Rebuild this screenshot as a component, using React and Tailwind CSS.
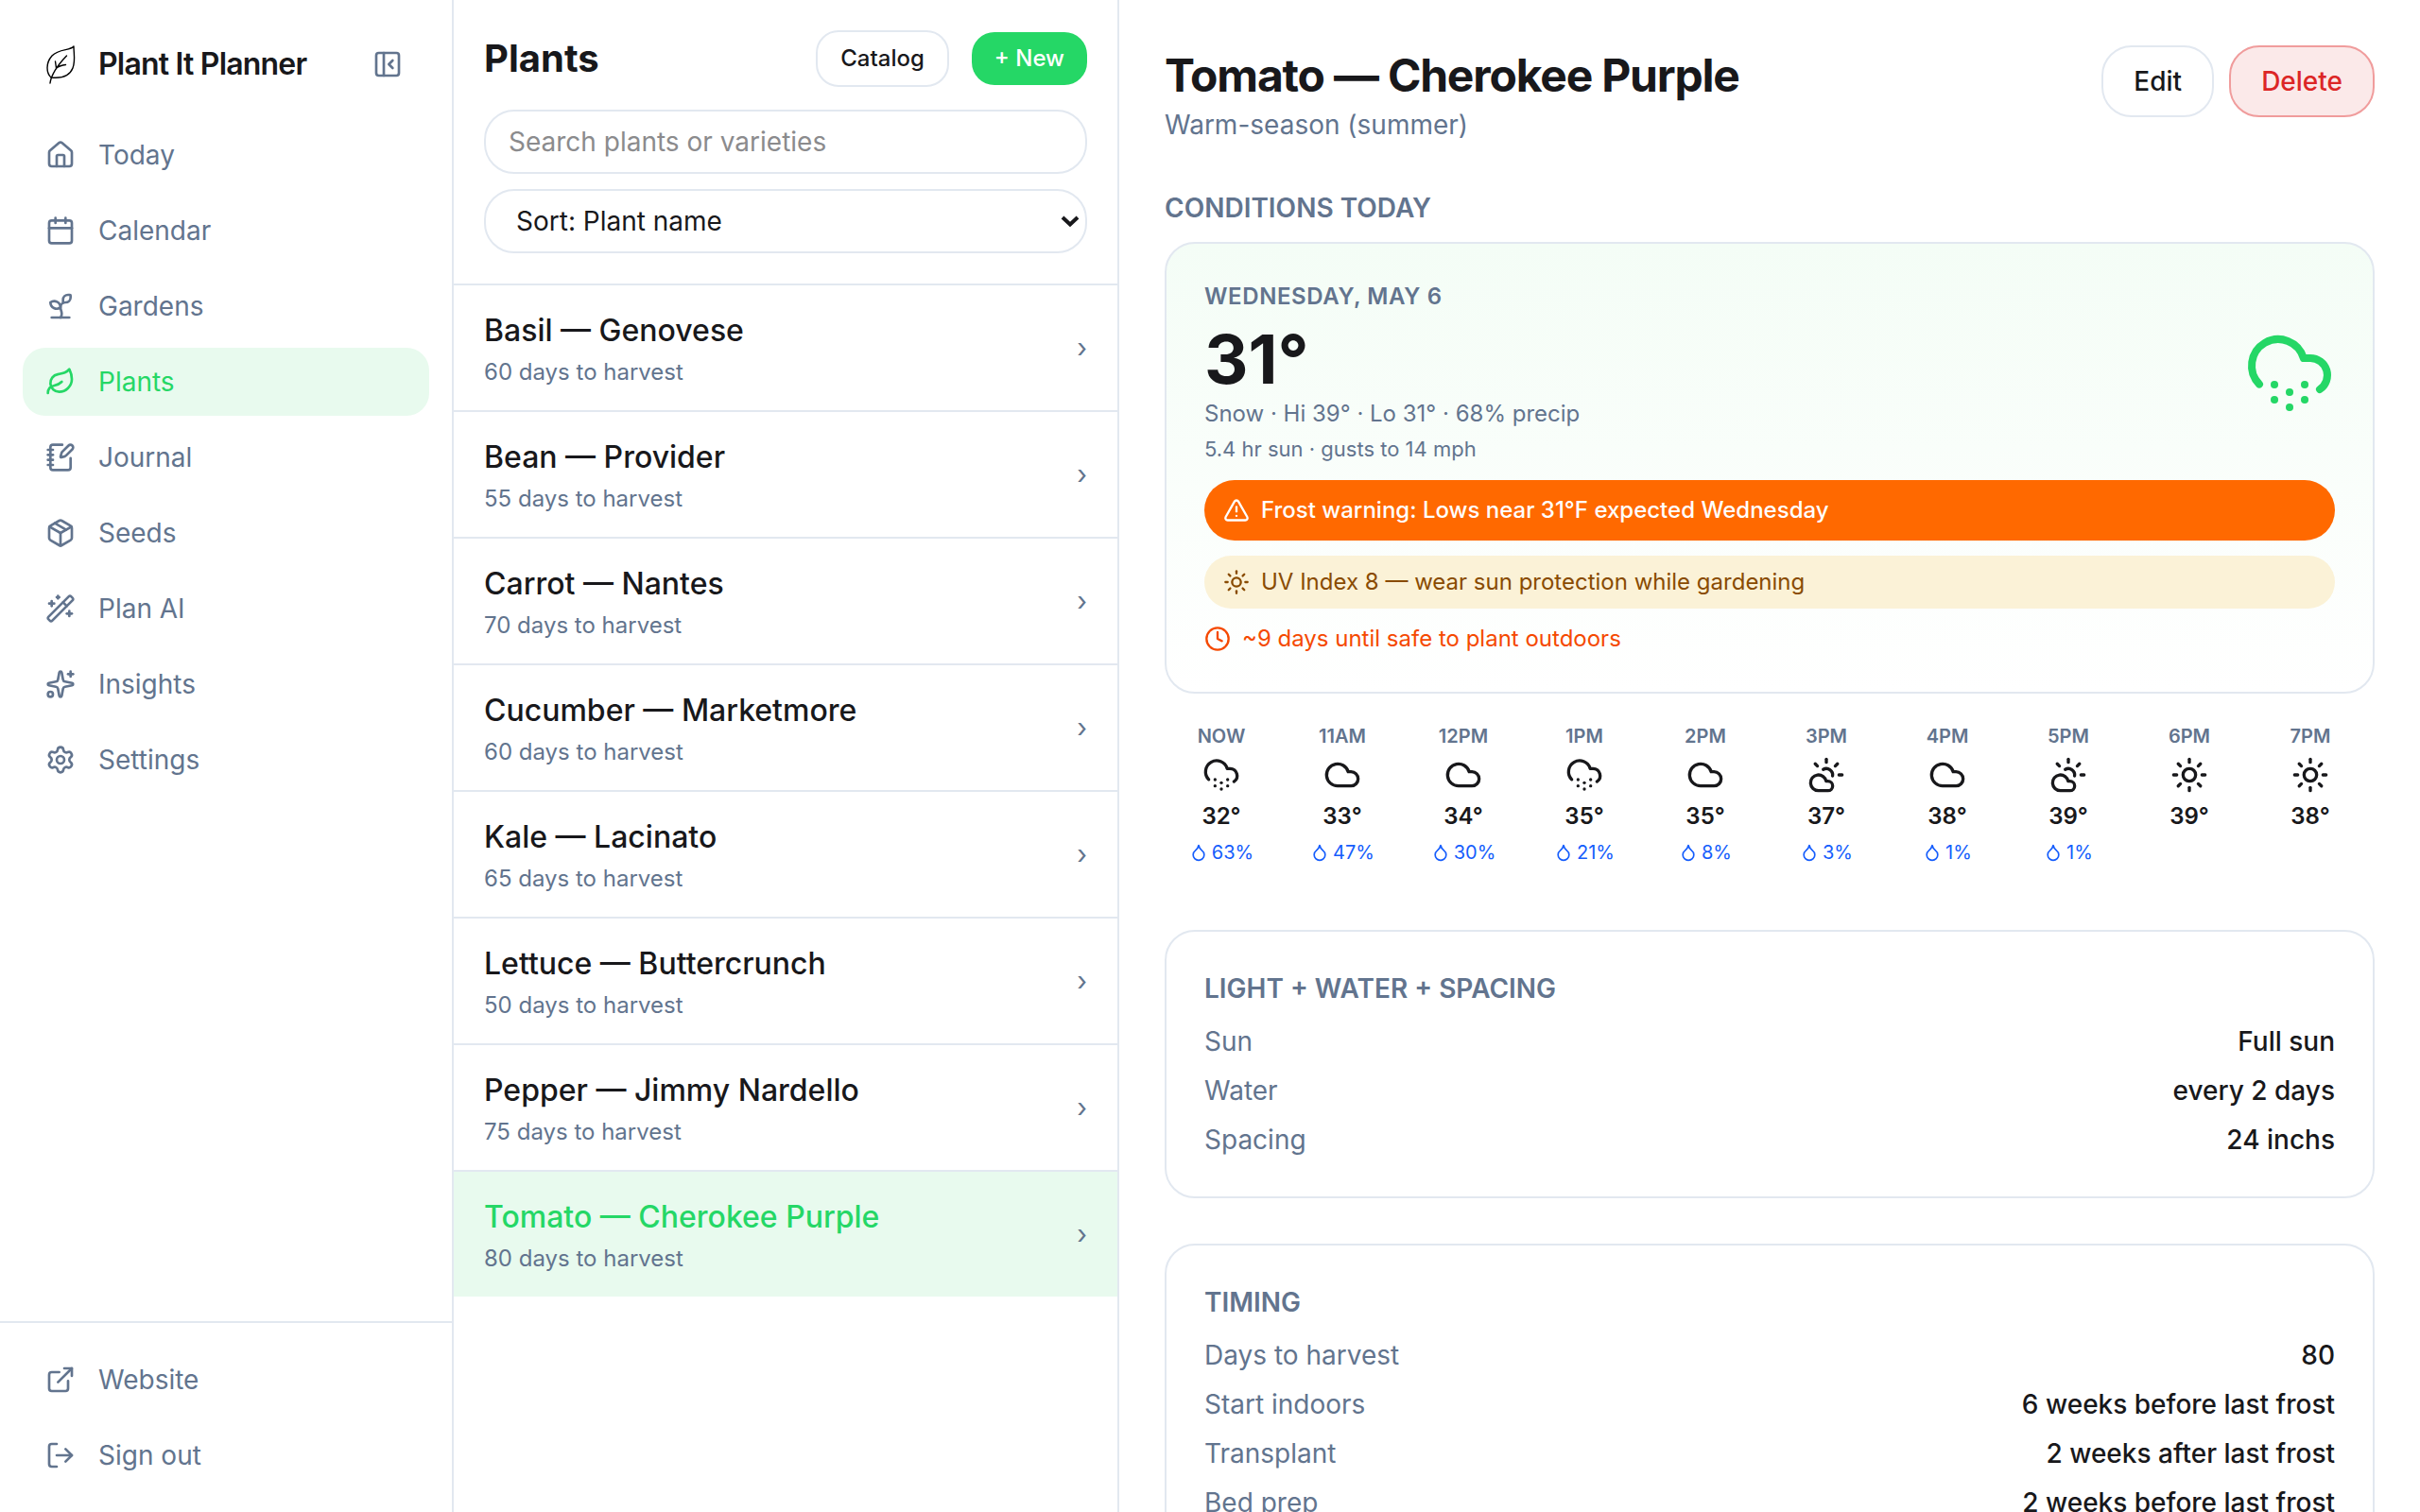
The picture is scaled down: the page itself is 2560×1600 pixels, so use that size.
import React, { useState } from 'react';
import {
  House, Calendar, Sprout, Leaf, NotebookPen, Package, WandSparkles, Sparkles, Settings,
  ExternalLink, LogOut, PanelLeftClose, CloudSnow, Cloud, CloudSun, Sun, Droplet,
  TriangleAlert, Clock,
} from 'lucide-react';

const navItems = [
  { label: 'Today', icon: House },
  { label: 'Calendar', icon: Calendar },
  { label: 'Gardens', icon: Sprout },
  { label: 'Plants', icon: Leaf },
  { label: 'Journal', icon: NotebookPen },
  { label: 'Seeds', icon: Package },
  { label: 'Plan AI', icon: WandSparkles },
  { label: 'Insights', icon: Sparkles },
  { label: 'Settings', icon: Settings },
];

const plants = [
  { name: 'Basil — Genovese', days: 60 },
  { name: 'Bean — Provider', days: 55 },
  { name: 'Carrot — Nantes', days: 70 },
  { name: 'Cucumber — Marketmore', days: 60 },
  { name: 'Kale — Lacinato', days: 65 },
  { name: 'Lettuce — Buttercrunch', days: 50 },
  { name: 'Pepper — Jimmy Nardello', days: 75 },
  { name: 'Tomato — Cherokee Purple', days: 80 },
];

const hours = [
  { time: 'NOW', icon: CloudSnow, temp: 32, precip: 63 },
  { time: '11AM', icon: Cloud, temp: 33, precip: 47 },
  { time: '12PM', icon: Cloud, temp: 34, precip: 30 },
  { time: '1PM', icon: CloudSnow, temp: 35, precip: 21 },
  { time: '2PM', icon: Cloud, temp: 35, precip: 8 },
  { time: '3PM', icon: CloudSun, temp: 37, precip: 3 },
  { time: '4PM', icon: Cloud, temp: 38, precip: 1 },
  { time: '5PM', icon: CloudSun, temp: 39, precip: 1 },
  { time: '6PM', icon: Sun, temp: 39 },
  { time: '7PM', icon: Sun, temp: 38 },
];

const growing = [
  ['Sun', 'Full sun'],
  ['Water', 'every 2 days'],
  ['Spacing', '24 inchs'],
];

const timing = [
  ['Days to harvest', '80'],
  ['Start indoors', '6 weeks before last frost'],
  ['Transplant', '2 weeks after last frost'],
  ['Bed prep', '2 weeks before last frost'],
];

function Logo() {
  return (
    <svg viewBox="0 0 40 44" className="w-10 h-11 shrink-0" fill="none" stroke="#000" strokeWidth="1.4" strokeLinecap="round" strokeLinejoin="round" aria-hidden="true">
      <path d="M30 3C26 8 15 5 7 13C0 21 1 31 6 36C15 37 25 36 29 26C32 18 30 11 30 3Z" />
      <path d="M5 42C6 34 12 24 22.500 13M11.500 26L10.500 19M12.500 25.500C15 23.500 18 23 21.500 22.500" />
    </svg>
  );
}

function NavLink({ icon: Icon, label, active }) {
  return (
    <a href="#" className={`flex items-center gap-6 h-18 px-6 rounded-3xl text-[28px] ${active ? 'bg-[#e8faee] text-[#25d766]' : 'text-slate-500'}`}>
      <Icon size={32} className="shrink-0" />
      {label}
    </a>
  );
}

function InfoCard({ title, rows }) {
  return (
    <section className="border-2 border-slate-200 rounded-[32px] p-10">
      <h3 className="text-[28px] leading-10 font-semibold uppercase text-slate-500 mb-4">{title}</h3>
      <dl className="flex flex-col gap-3">
        {rows.map(([label, value]) => (
          <div key={label} className="flex justify-between text-[28px] leading-10">
            <dt className="text-slate-500">{label}</dt>
            <dd className="font-medium">{value}</dd>
          </div>
        ))}
      </dl>
    </section>
  );
}

export default function App() {
  const [search, setSearch] = useState('');
  const [sort, setSort] = useState('name');
  const selected = 'Tomato — Cherokee Purple';

  return (
    <div className="flex h-screen overflow-hidden bg-white text-[#18181b] font-['Inter',sans-serif]">
      <aside className="w-120 shrink-0 flex flex-col border-r-2 border-slate-200">
        <div className="flex items-center h-22 mt-6 mb-4 pl-12 pr-13">
          <Logo />
          <span className="ml-4 flex-1 text-[32px] font-semibold tracking-tight">Plant It Planner</span>
          <button type="button" aria-label="Collapse sidebar" className="text-slate-500"><PanelLeftClose size={32} /></button>
        </div>
        <nav className="flex-1 flex flex-col gap-2 px-6">
          {navItems.map(item => <NavLink key={item.label} {...item} active={item.label === 'Plants'} />)}
        </nav>
        <div className="flex flex-col gap-2 p-6 border-t-2 border-slate-200">
          <NavLink icon={ExternalLink} label="Website" />
          <NavLink icon={LogOut} label="Sign out" />
        </div>
      </aside>

      <section className="w-176 shrink-0 flex flex-col border-r-2 border-slate-200">
        <div className="p-8 border-b-2 border-slate-200">
          <div className="flex items-center gap-6 mb-6">
            <h1 className="flex-1 text-[40px] leading-15 font-bold">Plants</h1>
            <button type="button" className="h-15 px-6 border-2 border-slate-200 rounded-3xl text-2xl font-medium">Catalog</button>
            <button type="button" className="h-14 px-6 rounded-3xl bg-[#25d766] text-white text-2xl font-medium">+ New</button>
          </div>
          <input type="search" aria-label="Search plants" placeholder="Search plants or varieties" value={search} onChange={(e) => setSearch(e.target.value)} className="block w-full h-17 px-6 mb-4 border-2 border-slate-200 rounded-[32px] text-[28px] placeholder:text-[#8b8b8d]" />
          <div className="relative">
            <select aria-label="Sort plants" value={sort} onChange={(e) => setSort(e.target.value)} className="block w-full h-17 px-8 border-2 border-slate-200 rounded-[32px] text-[28px] appearance-none bg-white">
              <option value="name">Sort: Plant name</option>
              <option value="days">Sort: Days to harvest</option>
            </select>
            <svg viewBox="0 0 20 12" className="absolute right-2 top-7 w-5 h-3 pointer-events-none" fill="none" stroke="currentColor" strokeWidth="4" aria-hidden="true">
              <path d="M2 2L10 9.500L18 2" />
            </svg>
          </div>
        </div>
        <ul className="divide-y-2 divide-slate-200">
          {plants.map(plant => (
            <li key={plant.name}>
              <a href="#" className={`flex items-center justify-between px-8 py-6 ${plant.name === selected ? 'bg-[#e8faee]' : ''}`}>
                <span>
                  <span className={`block mb-1 text-[32px] leading-12 font-medium ${plant.name === selected ? 'text-[#25d766]' : ''}`}>{plant.name}</span>
                  <span className="block text-2xl leading-8 text-slate-500">{plant.days} days to harvest</span>
                </span>
                <span className="text-[28px] text-slate-500">›</span>
              </a>
            </li>
          ))}
        </ul>
      </section>

      <main className="flex-1 min-w-0 overflow-hidden p-12">
        <header className="flex items-start justify-between mb-12">
          <div>
            <h2 className="text-5xl leading-16 font-bold tracking-tight">{selected}</h2>
            <p className="text-[28px] leading-10 text-slate-500">Warm-season (summer)</p>
          </div>
          <div className="flex gap-4">
            <button type="button" className="h-19 px-8 border-2 border-slate-200 rounded-[32px] text-[28px] font-medium">Edit</button>
            <button type="button" className="h-19 px-8 border-2 border-[#f09c9c] rounded-[32px] bg-[#fbe9e9] text-[#dc2626] text-[28px] font-medium">Delete</button>
          </div>
        </header>

        <h3 className="text-[28px] leading-10 font-semibold uppercase text-slate-500 mb-4">Conditions today</h3>
        <section className="flex flex-col gap-4 border-2 border-slate-200 rounded-[32px] p-10 bg-linear-to-b from-[#f4fdf6] to-white">
          <div className="flex items-center justify-between">
            <div>
              <p className="text-2xl leading-8 font-semibold tracking-wide uppercase text-slate-500">Wednesday, May 6</p>
              <p className="mt-3 mb-1 text-7xl leading-19 font-bold">31°</p>
              <p className="mb-1 text-2xl leading-8 text-slate-500">Snow · Hi 39° · Lo 31° · 68% precip</p>
              <p className="text-[22px] leading-[34px] text-slate-500">5.4 hr sun · gusts to 14 mph</p>
            </div>
            <CloudSnow size={96} className="text-[#25d766]" />
          </div>
          <div className="flex items-center gap-3 h-16 px-5 rounded-[32px] bg-[#ff6900] text-white text-2xl font-medium">
            <TriangleAlert size={28} />
            Frost warning: Lows near 31°F expected Wednesday
          </div>
          <div className="flex items-center gap-3 h-14 px-5 rounded-[32px] bg-[#fbf2d7] text-[#894b00] text-2xl">
            <Sun size={28} />
            UV Index 8 — wear sun protection while gardening
          </div>
          <div className="flex items-center gap-3 text-2xl text-[#f54900]">
            <Clock size={28} />
            ~9 days until safe to plant outdoors
          </div>
        </section>

        <ul className="flex gap-2 mt-6 mb-15 py-2">
          {hours.map(({ time, icon: Icon, temp, precip }) => (
            <li key={time} className="w-30 shrink-0 flex flex-col items-center gap-2">
              <span className="text-xl leading-[26px] font-semibold text-slate-500">{time}</span>
              <Icon size={40} />
              <span className="text-2xl leading-8 font-semibold">{temp}°</span>
              <span className="flex items-center gap-1 h-7 text-xl text-[#155dfc]">
                {precip && <><Droplet size={20} />{precip}%</>}
              </span>
            </li>
          ))}
        </ul>

        <div className="flex flex-col gap-12">
          <InfoCard title="Light + Water + Spacing" rows={growing} />
          <InfoCard title="Timing" rows={timing} />
        </div>
      </main>
    </div>
  );
}
